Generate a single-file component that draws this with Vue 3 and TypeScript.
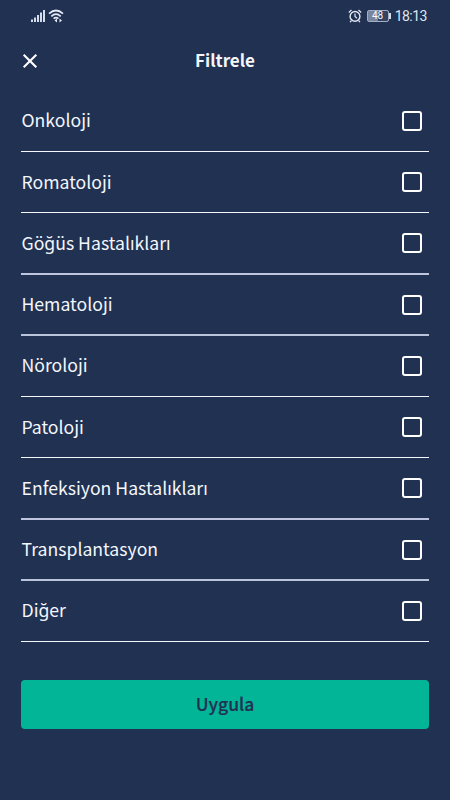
<script setup lang="ts">
import { ref } from 'vue'

interface Branch {
  name: string
  checked: boolean
}

const branches = ref<Branch[]>(
  [
    'Onkoloji',
    'Romatoloji',
    'Göğüs Hastalıkları',
    'Hematoloji',
    'Nöroloji',
    'Patoloji',
    'Enfeksiyon Hastalıkları',
    'Transplantasyon',
    'Diğer',
  ].map((name) => ({ name, checked: false })),
)
</script>

<template>
  <main class="screen">
    <div class="status">
      <div class="status-side">
        <svg class="signal" width="16" height="14" viewBox="0 0 16 14">
          <path d="M2 10.500v2.500M5 8.500v4.500M8 6v7M11 3.500v9.500M14 1v12" stroke="#d5dcec" stroke-width="2" />
        </svg>
        <svg class="wifi" width="17" height="14" viewBox="0 0 17 14">
          <g fill="none" stroke="#e4e9f5" stroke-width="1.700">
            <path d="M1 4.700Q8 -1.700 15 4.700" />
            <path d="M3.300 7.300Q8 3.100 12.700 7.300" />
            <path d="M5.600 9.600Q8 7.500 10.400 9.600" />
          </g>
          <path d="M6.500 11.500L9 9.500V13.500ZM14 11.500L11.500 9.500V13.500Z" fill="#e4e9f5" />
        </svg>
      </div>
      <div class="status-side">
        <svg class="alarm" width="14" height="14" viewBox="0 0 14 14" fill="none" stroke="#e4e9f5">
          <circle cx="7" cy="7.400" r="4.900" stroke-width="1.400" />
          <path d="M7 4.500v3l2 1.700M.8 3.500L3.500 1M13.200 3.500L10.500 1M3.500 11.500L2 13.200M10.500 11.500L12 13.200" stroke-width="1.200" />
        </svg>
        <div class="battery"><span>48</span></div>
        <span class="clock">18:13</span>
      </div>
    </div>

    <header class="header">
      <button class="close" aria-label="Kapat">
        <svg width="16" height="16" viewBox="0 0 16 16">
          <path d="M1.700 1.700L14.300 14.300M14.300 1.700L1.700 14.300" stroke="#fff" stroke-width="2.100" />
        </svg>
      </button>
      <h1>Filtrele</h1>
    </header>

    <ul class="list">
      <li v-for="branch in branches" :key="branch.name" class="row">
        <label>
          <span>{{ branch.name }}</span>
          <input v-model="branch.checked" type="checkbox" />
        </label>
      </li>
    </ul>

    <button class="apply"><span>Uygula</span></button>
  </main>
</template>

<style>
body {
  margin: 0;
  background: #213152;
}
</style>

<style scoped>
.screen {
  box-sizing: border-box;
  width: 450px;
  height: 800px;
  padding: 0 21px;
  overflow: hidden;
  background: #213152;
  color: #f3f6fb;
  font-family: 'Noto Sans CJK SC', 'Noto Sans', sans-serif;
  display: flex;
  flex-direction: column;
}

.status {
  height: 32px;
  padding: 0 2px 0 9px;
  display: flex;
  align-items: center;
  justify-content: space-between;
}

.status-side {
  display: flex;
  align-items: center;
}

.wifi {
  margin-left: 2px;
}

.battery {
  position: relative;
  box-sizing: border-box;
  width: 22px;
  height: 12px;
  margin-left: 5px;
  border: 1px solid #a3aec4;
  border-radius: 2px;
  background: linear-gradient(90deg, #78859f 48%, #35435f 48%);
  color: #fff;
  font: 400 10px/10px Roboto, sans-serif;
  text-align: center;
}

.battery::after {
  content: '';
  position: absolute;
  top: 2px;
  right: -3px;
  width: 2px;
  height: 6px;
  background: #d5dcec;
}

.clock {
  margin-left: 6px;
  color: #dfe4f0;
  font: 400 14px/16px Roboto, sans-serif;
  letter-spacing: -0.500px;
}

.header {
  height: 58.750px;
  padding: 0 0 0 1px;
  display: grid;
  grid-template-columns: 16px 1fr 17px;
  align-items: center;
}

.close {
  width: 16px;
  height: 16px;
  padding: 0;
  border: 0;
  background: none;
}

.close svg {
  display: block;
}

h1 {
  margin: 0 0 2px;
  font-size: 17px;
  line-height: 24px;
  font-weight: 700;
  text-align: center;
}

.list {
  margin: 0;
  padding: 0;
  list-style: none;
}

.row {
  box-sizing: border-box;
  height: 61.250px;
  border-bottom: 1px solid #f5f7fc;
}

.row:nth-child(4n + 3) {
  border-bottom: 2px solid #bfc5de;
}

.row:nth-child(4n) {
  border-bottom: 2px solid #b9c3da;
}

.row label {
  height: 60px;
  padding: 0 7px 0 0.500px;
  display: flex;
  align-items: center;
  justify-content: space-between;
  font-size: 17.650px;
  line-height: 26px;
}

.row label span {
  padding-bottom: 0.800px;
}

.row input {
  appearance: none;
  box-sizing: border-box;
  width: 20px;
  height: 20px;
  margin: 0;
  border: 2px solid #fff;
  border-radius: 3px;
}

.row input:checked {
  background: #02b597;
}

.apply {
  height: 49px;
  margin-top: 38px;
  padding: 0 0 2px;
  border: 0;
  border-radius: 4px;
  background: #02b597;
  color: #213152;
  font-family: inherit;
  font-size: 17.500px;
  font-weight: 500;
  -webkit-text-stroke: 0.200px #213152;
}
</style>
